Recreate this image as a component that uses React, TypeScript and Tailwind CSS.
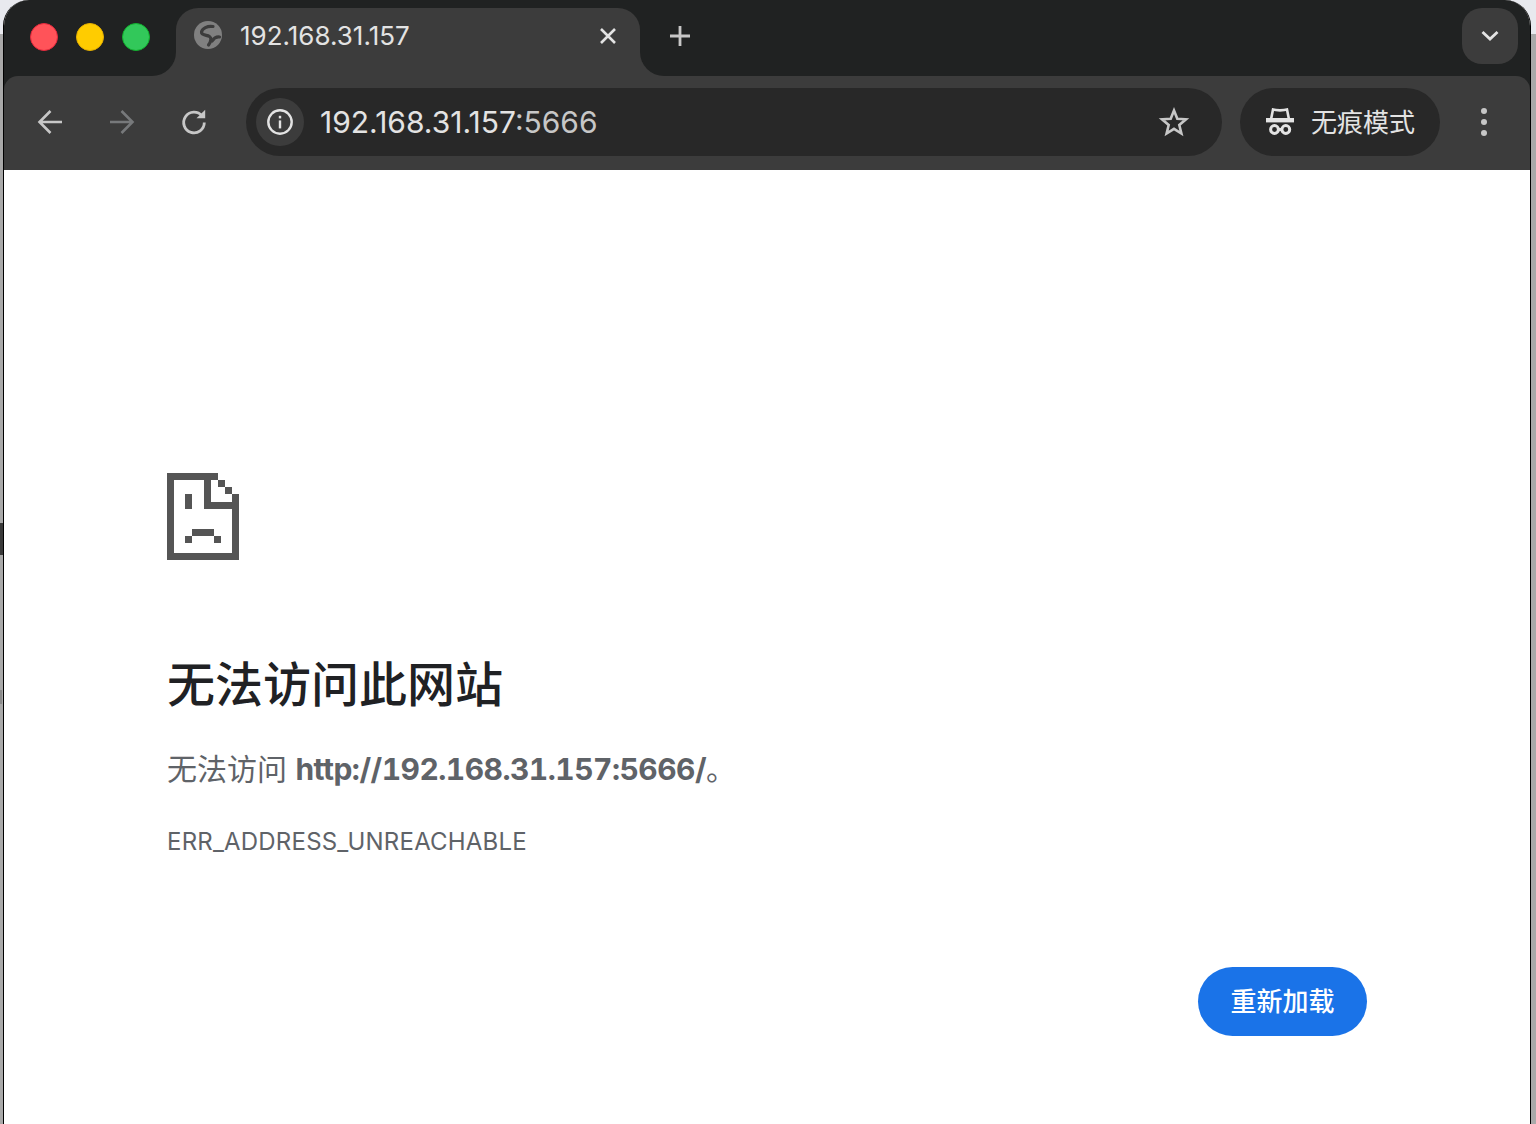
const cjk = "font-['Inter','Noto_Sans_CJK_SC',sans-serif]"

function SadFile() {
  return (
    <svg width="72" height="87" viewBox="0 0 72 87" fill="#555555" shapeRendering="crispEdges">
      <rect x="0" y="0" width="51" height="7" />
      <rect x="0" y="0" width="7" height="87" />
      <rect x="0" y="80" width="72" height="7" />
      <rect x="65" y="21" width="7" height="66" />
      <rect x="37" y="0" width="7" height="36" />
      <rect x="37" y="29" width="35" height="7" />
      <rect x="51" y="7" width="7" height="7" />
      <rect x="58" y="14" width="7" height="7" />
      <rect x="18" y="21" width="7" height="15" />
      <rect x="25" y="56" width="22" height="7" />
      <rect x="18" y="63" width="7" height="7" />
      <rect x="47" y="63" width="7" height="7" />
    </svg>
  )
}

function Globe() {
  return (
    <svg className="-mt-[2px]" width="28" height="28" viewBox="0 0 28 28" fill="none">
      <circle cx="14" cy="14" r="14" fill="#808080" />
      <path d="M19 5.5C13.5 4.5 8 7.5 7.5 11C7 14.5 13 14 15.5 15.5C17.5 16.8 17.5 19.5 14.5 24" stroke="#3c3c3c" strokeWidth="3.2" strokeLinecap="round" />
      <path d="M25.5 16C22 15.5 20 17 18 20" stroke="#3c3c3c" strokeWidth="3.2" strokeLinecap="round" />
    </svg>
  )
}

function Arrow({ flip, color }: { flip?: boolean; color: string }) {
  return (
    <svg width="28" height="28" viewBox="0 0 28 28" fill="none" className={flip ? "-scale-x-100" : ""}>
      <path d="M26 14H4M14.5 3L3.5 14L14.5 25" stroke={color} strokeWidth="2.6" />
    </svg>
  )
}

function Reload() {
  return (
    <svg width="28" height="28" viewBox="0 0 28 28" fill="none">
      <path d="M22 8A10.3 10.3 0 1 0 24.3 14.5" stroke="#c7c7c7" strokeWidth="2.8" />
      <path d="M16.5 10.3H25.2V1.7Z" fill="#c7c7c7" />
    </svg>
  )
}

function Info() {
  return (
    <svg width="28" height="28" viewBox="0 0 28 28" fill="none">
      <circle cx="14" cy="14" r="11.7" stroke="#e3e3e3" strokeWidth="2.4" />
      <rect x="12.8" y="12.4" width="2.4" height="8" fill="#e3e3e3" />
      <rect x="12.8" y="7.8" width="2.4" height="2.6" fill="#e3e3e3" />
    </svg>
  )
}

function Star() {
  return (
    <svg width="32" height="32" viewBox="0 0 32 32" fill="none">
      <path d="M16 4.5L19.3 12.7L28 13.3L21.3 19L23.4 27.5L16 22.9L8.6 27.5L10.7 19L4 13.3L12.7 12.7Z" stroke="#c7c7c7" strokeWidth="2.6" />
    </svg>
  )
}

function Incognito() {
  return (
    <svg width="30" height="28" viewBox="0 0 30 28" fill="none">
      <path d="M6 11.5L8 1.6C11 2.6 19 2.6 22 1.6L24 11.5" stroke="#e3e3e3" strokeWidth="2.6" />
      <rect x="1" y="10" width="28" height="4.4" fill="#e3e3e3" />
      <circle cx="9.5" cy="21.5" r="3.9" stroke="#e3e3e3" strokeWidth="3" />
      <circle cx="20.8" cy="21.5" r="3.9" stroke="#e3e3e3" strokeWidth="3" />
      <rect x="12" y="20" width="6" height="3" fill="#e3e3e3" />
    </svg>
  )
}

export default function App() {
  return (
    <div className={`flex h-[1124px] w-[1536px] overflow-hidden bg-[#e8e9ee] ${cjk}`}>
      <div className="relative mt-[34px] w-[3px] bg-[#a9a9a9]">
        <div className="absolute left-0 top-[489px] h-[32px] w-[3px] bg-[#3a3a3a]" />
        <div className="absolute left-0 top-[656px] h-[14px] w-[2px] bg-[#8a8a8a]" />
      </div>

      <div className="flex w-[1528px] flex-col overflow-hidden rounded-t-[26px] border-x border-black bg-white">
        <div className="bg-[#202222]">
          {/* tab strip */}
          <div className="flex h-[76px] items-start pl-[26px] pr-[12px]">
            <div className="flex h-[74px] items-center gap-[18px]">
              <span className="h-[28px] w-[28px] rounded-full border border-[#e5283c] bg-[#ff5359]" />
              <span className="h-[28px] w-[28px] rounded-full border border-[#e5b000] bg-[#ffcc00]" />
              <span className="h-[28px] w-[28px] rounded-full border border-[#12b02e] bg-[#32c85a]" />
            </div>
            <div className="relative ml-[26px] mt-[8px] flex h-[68px] w-[464px] items-center rounded-t-[22px] bg-[#3c3c3c] pb-[12px] pl-[18px] pr-[18px]">
              <div className="absolute -left-[24px] bottom-0 h-[24px] w-[24px] bg-[#3c3c3c]">
                <div className="h-full w-full rounded-br-[24px] bg-[#202222]" />
              </div>
              <div className="absolute -right-[24px] bottom-0 h-[24px] w-[24px] bg-[#3c3c3c]">
                <div className="h-full w-full rounded-bl-[24px] bg-[#202222]" />
              </div>
              <Globe />
              <span className="ml-[18px] text-[26px] leading-none text-[#e3e3e3]">192.168.31.157</span>
              <svg className="ml-auto" width="28" height="28" viewBox="0 0 28 28" fill="none">
                <path d="M7 7L21 21M21 7L7 21" stroke="#e3e3e3" strokeWidth="2.6" />
              </svg>
            </div>
            <svg className="ml-[26px] mt-[22px]" width="28" height="28" viewBox="0 0 28 28" fill="none">
              <path d="M14 4V24M4 14H24" stroke="#c7c7c7" strokeWidth="2.8" />
            </svg>
            <div className="ml-auto mt-[8px] flex h-[56px] w-[56px] items-center justify-center rounded-[20px] bg-[#3c3c3c]">
              <svg width="20" height="12" viewBox="0 0 20 12" fill="none">
                <path d="M2.5 2L10 9L17.5 2" stroke="#e3e3e3" strokeWidth="2.8" />
              </svg>
            </div>
          </div>

          {/* toolbar */}
          <div className="flex h-[94px] items-center rounded-t-[14px] bg-[#3c3c3c] pb-[2px] pl-[22px] pr-[22px]">
            <div className="flex items-center gap-[24px]">
              <div className="flex h-[48px] w-[48px] items-center justify-center"><Arrow color="#c7c7c7" /></div>
              <div className="flex h-[48px] w-[48px] items-center justify-center"><Arrow flip color="#77797b" /></div>
              <div className="flex h-[48px] w-[48px] items-center justify-center"><Reload /></div>
            </div>
            <div className="ml-[28px] flex h-[68px] w-[976px] items-center rounded-full bg-[#282828] pl-[10px] pr-[32px]">
              <div className="flex h-[48px] w-[48px] items-center justify-center rounded-full bg-[#3c3c3c]"><Info /></div>
              <span className="ml-[16px] text-[30px] leading-none text-[#e3e3e3]">
                192.168.31.157<span className="text-[#c7c7c7]">:5666</span>
              </span>
              <div className="ml-auto"><Star /></div>
            </div>
            <div className="ml-[18px] flex h-[68px] w-[200px] items-center rounded-full bg-[#282828] pl-[25px]">
              <Incognito />
              <span className="ml-[16px] mt-[2px] text-[26px] leading-none text-[#e3e3e3]">无痕模式</span>
            </div>
            <div className="ml-[41px] flex flex-col gap-[5px]">
              <span className="h-[6px] w-[6px] rounded-full bg-[#c7c7c7]" />
              <span className="h-[6px] w-[6px] rounded-full bg-[#c7c7c7]" />
              <span className="h-[6px] w-[6px] rounded-full bg-[#c7c7c7]" />
            </div>
          </div>
        </div>

        {/* error page */}
        <div className="flex flex-1 flex-col px-[163px] pt-[303px]">
          <SadFile />
          <h1 className="mt-[95px] text-[48px] font-medium leading-[60px] text-[#202124]">无法访问此网站</h1>
          <p className="mt-[34px] text-[30px] leading-[40px] text-[#5f6368]">
            无法访问 <strong className="font-bold tabular-nums tracking-[-0.52px]">http://192.168.31.157:5666/</strong>。
          </p>
          <p className="mt-[37px] text-[24px] leading-[32px] tracking-[0.2px] text-[#5f6368]">ERR_ADDRESS_UNREACHABLE</p>
          <div className="mt-[109px] flex justify-end">
            <button className="flex h-[69px] w-[169px] items-center justify-center rounded-full bg-[#1a73e8] text-[26px] font-medium text-white">
              重新加载
            </button>
          </div>
        </div>
      </div>

      <div className="mt-[34px] w-[5px] bg-[#a9a9a9]" />
    </div>
  )
}
